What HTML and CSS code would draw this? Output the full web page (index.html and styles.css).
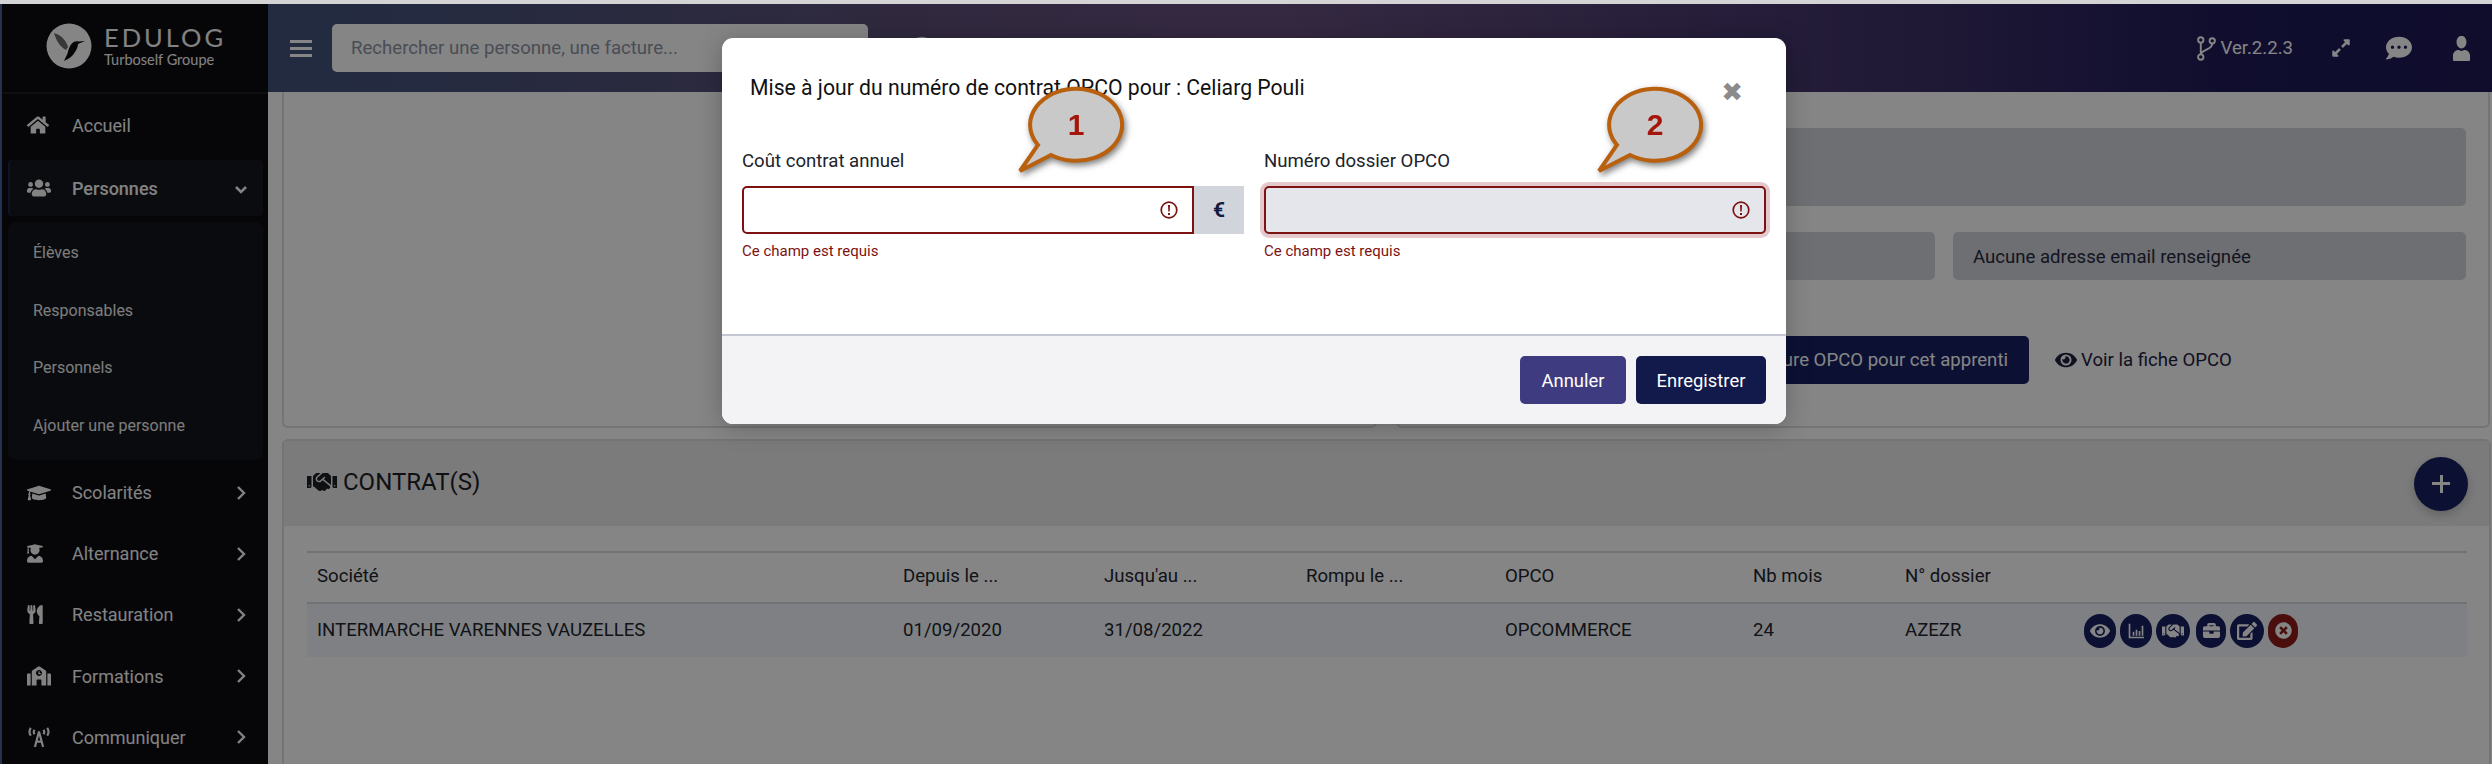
FILE: index.html
```html
<!DOCTYPE html>
<html lang="fr">
<head>
    <meta charset="utf-8">
    <title>Edulog</title>
    <link rel="stylesheet" href="styles.css">
</head>
<body>
    <!-- icon sprite -->
    <svg class="sprite" xmlns="http://www.w3.org/2000/svg">
        <symbol id="i-home" viewBox="0 0 576 512"><path d="M280.37 148.26L96 300.11V464a16 16 0 0 0 16 16l112.06-.29a16 16 0 0 0 15.92-16V368a16 16 0 0 1 16-16h64a16 16 0 0 1 16 16v95.64a16 16 0 0 0 16 16.05L464 480a16 16 0 0 0 16-16V300L295.67 148.26a12.19 12.19 0 0 0-15.3 0zM571.6 251.47L488 182.56V44.05a12 12 0 0 0-12-12h-56a12 12 0 0 0-12 12v72.61L318.47 43a48 48 0 0 0-61 0L4.34 251.47a12 12 0 0 0-1.6 16.9l25.5 31A12 12 0 0 0 45.15 301l235.22-193.74a12.19 12.19 0 0 1 15.3 0L530.9 301a12 12 0 0 0 16.9-1.6l25.5-31a12 12 0 0 0-1.7-16.93z"/></symbol>
        <symbol id="i-users" viewBox="0 0 640 512"><path d="M96 224c35.3 0 64-28.7 64-64s-28.7-64-64-64-64 28.7-64 64 28.7 64 64 64zm448 0c35.3 0 64-28.7 64-64s-28.7-64-64-64-64 28.7-64 64 28.7 64 64 64zm32 32h-64c-17.6 0-33.5 7.1-45.1 18.6 40.3 22.1 68.9 62 75.1 109.4h66c17.7 0 32-14.3 32-32v-32c0-35.3-28.7-64-64-64zm-256 0c61.9 0 112-50.1 112-112S381.9 32 320 32 208 82.1 208 144s50.1 112 112 112zm76.8 32h-8.3c-20.8 10-43.9 16-68.5 16s-47.6-6-68.5-16h-8.3C179.6 288 128 339.6 128 403.2V432c0 26.5 21.5 48 48 48h288c26.5 0 48-21.5 48-48v-28.8c0-63.6-51.6-115.2-115.2-115.2zm-223.7-13.4C161.5 263.1 145.6 256 128 256H64c-35.3 0-64 28.7-64 64v32c0 17.7 14.3 32 32 32h65.9c6.3-47.4 34.9-87.3 75.2-109.4z"/></symbol>
        <symbol id="i-cap" viewBox="0 0 640 512"><path d="M622.34 153.2L343.4 67.5c-15.2-4.67-31.6-4.67-46.79 0L17.66 153.2c-23.54 7.23-23.54 38.36 0 45.59l48.63 14.94c-10.67 13.19-17.23 29.28-17.88 46.9C38.78 266.15 32 276.11 32 288c0 10.78 5.68 19.85 13.86 25.65L20.33 428.53C18.11 438.52 25.71 448 35.94 448h56.11c10.24 0 17.84-9.48 15.62-19.47L82.14 313.65C90.32 307.85 96 298.78 96 288c0-11.57-6.47-21.25-15.66-26.87.76-15.02 8.44-28.3 20.69-36.72L296.6 284.5c9.06 2.78 26.44 6.25 46.79 0l278.95-85.7c23.55-7.24 23.55-38.36 0-45.6zM352.79 315.09c-28.53 8.76-52.84 3.92-65.59 0l-145.02-44.55L128 384c0 35.35 85.96 64 192 64s192-28.65 192-64l-14.18-113.47-145.03 44.56z"/></symbol>
        <symbol id="i-grad" viewBox="0 0 448 512"><path d="M319.4 320.6L224 416l-95.4-95.4C57.1 323.7 0 382.2 0 454.4v9.6c0 26.5 21.5 48 48 48h352c26.5 0 48-21.5 48-48v-9.6c0-72.2-57.1-130.7-128.6-133.8zM13.6 79.8l6.4 1.5v58.4c-7 4.2-12 11.5-12 20.3 0 8.4 4.6 15.4 11.1 19.7L3.5 242c-1.7 6.9 2.1 14 7.6 14h41.8c5.5 0 9.3-7.1 7.6-14l-15.6-62.3C51.4 175.4 56 168.4 56 160c0-8.8-5-16.1-12-20.3V87.1l66 15.9c-8.6 17.2-14 36.4-14 57 0 70.7 57.3 128 128 128s128-57.3 128-128c0-20.6-5.3-39.8-14-57l96.3-23.2c18.2-4.4 18.2-27.1 0-31.5l-190.4-46c-13-3.1-26.7-3.1-39.7 0L13.6 48.2c-18.1 4.4-18.1 27.2 0 31.6z"/></symbol>
        <symbol id="i-utensils" viewBox="0 0 416 512"><path d="M207.9 15.2c.8 4.7 16.1 94.5 16.1 128.8 0 52.3-27.8 89.6-68.9 104.6L168 486.7c.7 13.7-10.2 25.3-24 25.3H80c-13.7 0-24.7-11.5-24-25.3l12.9-238.1C27.7 233.6 0 196.2 0 144 0 109.6 15.3 19.9 16.1 15.2 19.3-5.1 61.4-5.4 64 16.3v141.2c1.3 3.4 15.1 3.2 16 0 1.4-25.3 7.9-139.2 8-141.8 3.3-20.8 44.7-20.8 47.9 0 .2 2.7 6.6 116.5 8 141.8.9 3.2 14.8 3.4 16 0V16.3c2.6-21.6 44.8-21.4 48-1.1zm119.2 285.7l-15 185.1c-1.2 14 9.9 26 23.9 26h56c13.3 0 24-10.7 24-24V24c0-13.2-10.7-24-24-24-82.5 0-221.4 178.5-64.9 300.9z"/></symbol>
        <symbol id="i-school" viewBox="0 0 640 512"><path d="M0 224v272c0 8.84 7.16 16 16 16h80V192H32c-17.67 0-32 14.33-32 32zm360-48h-24v-40c0-4.42-3.58-8-8-8h-16c-4.42 0-8 3.58-8 8v64c0 4.42 3.58 8 8 8h48c4.42 0 8-3.58 8-8v-16c0-4.42-3.58-8-8-8zm137.75-63.96l-160-106.67a32.02 32.02 0 0 0-35.5 0l-160 106.67A32.002 32.002 0 0 0 128 138.66V512h128V368c0-8.84 7.16-16 16-16h96c8.84 0 16 7.16 16 16v144h128V138.67c0-10.7-5.35-20.7-14.25-26.63zM320 256c-44.18 0-80-35.82-80-80s35.82-80 80-80 80 35.82 80 80-35.82 80-80 80zm288-64h-64v320h80c8.84 0 16-7.16 16-16V224c0-17.67-14.33-32-32-32z"/></symbol>
        <symbol id="i-tower" viewBox="0 0 26 22"><g fill="none" stroke="currentColor" stroke-width="2.4"><path d="M4 1Q1 5 4 9.5M22 1Q25 5 22 9.5M8 3Q6.5 5.5 8 8M18 3Q19.5 5.5 18 8"/><path d="M13 5L8.5 22M13 5l4.5 17M10 16h6"/></g></symbol>
        <symbol id="i-eye" viewBox="0 0 576 512"><path d="M572.52 241.4C518.29 135.59 410.93 64 288 64S57.68 135.64 3.48 241.41a32.35 32.35 0 0 0 0 29.19C57.71 376.41 165.07 448 288 448s230.32-71.64 284.52-177.41a32.35 32.35 0 0 0 0-29.19zM288 400a144 144 0 1 1 144-144 143.93 143.93 0 0 1-144 144zm0-240a95.31 95.31 0 0 0-25.31 3.79 47.85 47.85 0 0 1-66.9 66.9A95.78 95.78 0 1 0 288 160z"/></symbol>
        <symbol id="i-chart" viewBox="0 0 24 24"><path d="M1 1h2.5v19.5H24V23H1zM7 13h2.5v6H7zM11.5 10H14v9h-2.5zM16 12h2.5v7H16zM20.5 4H23v15h-2.5z"/></symbol>
        <symbol id="i-handshake" viewBox="0 0 640 512"><path d="M434.7 64h-85.9c-8 0-15.7 3-21.6 8.4l-98.3 90c-.1.1-.2.3-.3.4-16.6 15.6-16.3 40.5-2.1 56 12.7 13.9 39.4 17.6 56.1 2.7.1-.1.3-.1.4-.2l79.9-73.2c6.5-5.9 16.7-5.5 22.6 1 6 6.5 5.5 16.6-1 22.6l-26.1 23.9L504 313.8c2.9 2.4 5.5 5 7.9 7.7V128l-54.6-54.6c-5.9-6-14.1-9.4-22.6-9.4zM544 128.2v223.9c0 17.7 14.3 32 32 32h64V128.2h-96zm48 223.9c-8.8 0-16-7.2-16-16s7.2-16 16-16 16 7.2 16 16-7.2 16-16 16zM0 384h64c17.7 0 32-14.3 32-32V128.2H0V384zm48-63.9c8.8 0 16 7.2 16 16s-7.2 16-16 16-16-7.2-16-16c0-8.9 7.2-16 16-16zm435.9 18.6L334.6 217.5l-30 27.5c-29.7 27.1-75.2 24.5-101.7-4.4-26.9-29.4-24.8-74.9 4.4-101.7L289.1 64h-83.8c-8.5 0-16.6 3.4-22.6 9.4L128 128v223.9h18.3l90.5 81.9c27.4 22.3 67.7 18.1 90-9.3l.2-.2 17.9 15.5c15.9 13 39.4 10.5 52.3-5.4l31.4-38.6 5.4 4.4c13.7 11.1 33.9 9.1 45-4.7l9.5-11.7c11.2-13.8 9.1-33.9-4.6-45z"/></symbol>
        <symbol id="i-briefcase" viewBox="0 0 512 512"><path d="M320 336c0 8.84-7.16 16-16 16h-96c-8.84 0-16-7.16-16-16v-48H0v144c0 25.6 22.4 48 48 48h416c25.6 0 48-22.4 48-48V288H320v48zm144-208h-80V80c0-25.6-22.4-48-48-48H176c-25.6 0-48 22.4-48 48v48H48c-25.6 0-48 22.4-48 48v80h512v-80c0-25.6-22.4-48-48-48zm-144 0H192V96h128v32z"/></symbol>
        <symbol id="i-edit" viewBox="0 0 576 512"><path d="M402.6 83.2l90.2 90.2c3.8 3.8 3.8 10 0 13.8L274.4 405.6l-92.8 10.3c-12.4 1.4-22.9-9.1-21.5-21.5l10.3-92.8L388.8 83.2c3.8-3.8 10-3.8 13.8 0zm162-22.9l-48.8-48.8c-15.2-15.2-39.9-15.2-55.2 0l-35.4 35.4c-3.8 3.8-3.8 10 0 13.8l90.2 90.2c3.8 3.8 10 3.8 13.8 0l35.4-35.4c15.2-15.3 15.2-40 0-55.2zM384 346.2V448H64V128h229.8c3.2 0 6.2-1.3 8.5-3.5l40-40c7.6-7.6 2.2-20.5-8.5-20.5H48C21.5 64 0 85.5 0 112v352c0 26.5 21.5 48 48 48h352c26.5 0 48-21.5 48-48V306.2c0-10.7-12.9-16-20.5-8.5l-40 40c-2.2 2.3-3.5 5.3-3.5 8.5z"/></symbol>
        <symbol id="i-times-circle" viewBox="0 0 512 512"><path d="M256 8C119 8 8 119 8 256s111 248 248 248 248-111 248-248S393 8 256 8zm121.6 313.1c4.7 4.7 4.7 12.3 0 17L338 377.6c-4.7 4.7-12.3 4.7-17 0L256 312l-65.1 65.6c-4.7 4.7-12.3 4.7-17 0L134.4 338c-4.7-4.7-4.7-12.3 0-17l65.6-65-65.6-65.1c-4.7-4.7-4.7-12.3 0-17l39.6-39.6c4.7-4.7 12.3-4.7 17 0l65 65.7 65.1-65.6c4.7-4.7 12.3-4.7 17 0l39.6 39.6c4.7 4.7 4.7 12.3 0 17L312 256l65.6 65.1z"/></symbol>
        <symbol id="i-expand" viewBox="0 0 448 512"><path d="M212.686 315.314L120 408l32.922 31.029c15.12 15.12 4.412 40.971-16.97 40.971h-112C10.697 480 0 469.255 0 456V344c0-21.382 25.803-32.09 40.922-16.971L72 360l92.686-92.686c6.248-6.248 16.379-6.248 22.627 0l25.373 25.373c6.249 6.248 6.249 16.378 0 22.627zm22.628-118.628L328 104l-32.922-31.029C279.958 57.851 290.666 32 312.048 32h112C437.303 32 448 42.745 448 56v112c0 21.382-25.803 32.09-40.922 16.971L376 152l-92.686 92.686c-6.248 6.248-16.379 6.248-22.627 0l-25.373-25.373c-6.249-6.248-6.249-16.378 0-22.627z"/></symbol>
        <symbol id="i-comment" viewBox="0 0 512 512"><path d="M256 32C114.6 32 0 125.1 0 240c0 49.6 21.4 95 57 130.7C44.5 421.1 2.7 466 2.2 466.5c-2.2 2.3-2.8 5.7-1.5 8.7S4.8 480 8 480c66.3 0 116-31.8 140.6-51.4 32.7 12.3 69 19.4 107.4 19.4 141.4 0 256-93.1 256-208S397.4 32 256 32zM128 272c-17.7 0-32-14.3-32-32s14.3-32 32-32 32 14.3 32 32-14.3 32-32 32zm128 0c-17.7 0-32-14.3-32-32s14.3-32 32-32 32 14.3 32 32-14.3 32-32 32zm128 0c-17.7 0-32-14.3-32-32s14.3-32 32-32 32 14.3 32 32-14.3 32-32 32z"/></symbol>
        <symbol id="i-user" viewBox="0 0 448 512"><path d="M224 256c70.7 0 128-57.3 128-128S294.7 0 224 0 96 57.3 96 128s57.3 128 128 128zm89.6 32h-16.7c-22.2 10.2-46.9 16-72.9 16s-50.6-5.8-72.9-16h-16.7C60.2 288 0 348.2 0 422.4V464c0 26.5 21.5 48 48 48h352c26.5 0 48-21.5 48-48v-41.6c0-74.2-60.2-134.4-134.4-134.4z"/></symbol>
        <symbol id="i-branch" viewBox="0 0 22 26"><g fill="none" stroke="currentColor" stroke-width="2"><circle cx="5" cy="4" r="2.8"/><circle cx="5" cy="22" r="2.8"/><circle cx="17" cy="5" r="2.8"/><path d="M5 7v12M17 8c0 6-8 5-11.5 10"/></g></symbol>
        <symbol id="i-chevron-right" viewBox="0 0 10 16"><path d="M2 2l6 6-6 6" fill="none" stroke="currentColor" stroke-width="2.4"/></symbol>
        <symbol id="i-chevron-down" viewBox="0 0 14 10"><path d="M2 2l5 5 5-5" fill="none" stroke="currentColor" stroke-width="2.6"/></symbol>
        <symbol id="i-alert" viewBox="0 0 18 18"><circle cx="9" cy="9" r="7.8" fill="none" stroke="currentColor" stroke-width="1.7"/><path d="M8 4h2l-.3 6.5H8.3zM8 12h2v2H8z"/></symbol>
    </svg>

    <div class="app">
        <aside class="sidebar">
            <div class="logo">
                <svg class="logo-mark" viewBox="0 0 46 46">
                    <circle cx="23" cy="23" r="22.5" fill="#fff"/>
                    <path d="M8 10c7 2 12 7 14 14l-2 3C14 24 10 17 8 10z" fill="#6a6a6a"/>
                    <path d="M39 18l-6 .5c-3-1-6 0-8 3-2.5 4-3 7-3.5 9L18 38c5-2 9-5 11-9 2-3 3-6 3-8z" fill="#0c0d11"/>
                </svg>
                <div class="logo-text">
                    <div class="logo-name">EDULOG</div>
                    <div class="logo-sub">Turboself Groupe</div>
                </div>
            </div>
            <nav class="nav">
                <a class="nav-item nav-first"><svg class="nav-icon icon-home"><use href="#i-home"/></svg>Accueil</a>
                <a class="nav-item nav-active"><svg class="nav-icon icon-users"><use href="#i-users"/></svg>Personnes<svg class="nav-chevron-down"><use href="#i-chevron-down"/></svg></a>
                <div class="nav-sub">
                    <a class="nav-sub-item">Élèves</a>
                    <a class="nav-sub-item">Responsables</a>
                    <a class="nav-sub-item">Personnels</a>
                    <a class="nav-sub-item">Ajouter une personne</a>
                </div>
                <div class="nav-rest">
                    <a class="nav-item"><svg class="nav-icon icon-users"><use href="#i-cap"/></svg>Scolarités<svg class="nav-chevron"><use href="#i-chevron-right"/></svg></a>
                    <a class="nav-item"><svg class="nav-icon icon-tall"><use href="#i-grad"/></svg>Alternance<svg class="nav-chevron"><use href="#i-chevron-right"/></svg></a>
                    <a class="nav-item"><svg class="nav-icon icon-tall"><use href="#i-utensils"/></svg>Restauration<svg class="nav-chevron"><use href="#i-chevron-right"/></svg></a>
                    <a class="nav-item"><svg class="nav-icon icon-users"><use href="#i-school"/></svg>Formations<svg class="nav-chevron"><use href="#i-chevron-right"/></svg></a>
                    <a class="nav-item"><svg class="nav-icon icon-users"><use href="#i-tower"/></svg>Communiquer<svg class="nav-chevron"><use href="#i-chevron-right"/></svg></a>
                </div>
            </nav>
        </aside>

        <div class="main">
            <header class="topbar">
                <div class="burger"><span></span><span></span><span></span></div>
                <input class="search" type="text" placeholder="Rechercher une personne, une facture...">
                <svg class="history" viewBox="0 0 24 24"><circle cx="12" cy="12" r="10" fill="none" stroke="currentColor" stroke-width="2.5"/></svg>
                <div class="topbar-right">
                    <span class="version"><svg class="icon-branch"><use href="#i-branch"/></svg>Ver.2.2.3</span>
                    <svg class="icon-expand"><use href="#i-expand"/></svg>
                    <svg class="icon-comment"><use href="#i-comment"/></svg>
                    <svg class="icon-user"><use href="#i-user"/></svg>
                </div>
            </header>

            <div class="content">
                <div class="top-cards">
                    <section class="card"></section>
                    <section class="card card-opco">
                        <div class="field field-big"></div>
                        <div class="field-row">
                            <div class="field"></div>
                            <div class="field">Aucune adresse email renseignée</div>
                        </div>
                        <div class="opco-actions">
                            <button class="btn-opco">Ajouter une facture OPCO pour cet apprenti</button>
                            <a class="opco-link"><svg class="icon-eye"><use href="#i-eye"/></svg>Voir la fiche OPCO</a>
                        </div>
                    </section>
                </div>

                <section class="card card-contrats">
                    <div class="card-header">
                        <h2 class="card-title"><svg class="icon-title"><use href="#i-handshake"/></svg>CONTRAT(S)</h2>
                        <button class="fab"><span class="fab-plus"></span></button>
                    </div>
                    <div class="card-body">
                        <table class="table">
                            <colgroup>
                                <col class="col-societe">
                                <col class="col-depuis">
                                <col class="col-jusque">
                                <col class="col-rompu">
                                <col class="col-opco">
                                <col class="col-mois">
                                <col class="col-dossier">
                                <col>
                            </colgroup>
                            <thead>
                                <tr>
                                    <th>Société</th>
                                    <th>Depuis le ...</th>
                                    <th>Jusqu'au ...</th>
                                    <th>Rompu le ...</th>
                                    <th>OPCO</th>
                                    <th>Nb mois</th>
                                    <th>N° dossier</th>
                                    <th></th>
                                </tr>
                            </thead>
                            <tbody>
                                <tr>
                                    <td>INTERMARCHE VARENNES VAUZELLES</td>
                                    <td>01/09/2020</td>
                                    <td>31/08/2022</td>
                                    <td></td>
                                    <td>OPCOMMERCE</td>
                                    <td>24</td>
                                    <td>AZEZR</td>
                                    <td class="cell-actions">
                                        <div class="row-actions">
                                            <span class="pill"><svg class="pill-eye"><use href="#i-eye"/></svg></span>
                                            <span class="pill"><svg class="pill-chart"><use href="#i-chart"/></svg></span>
                                            <span class="pill pill-wide"><svg class="pill-hand"><use href="#i-handshake"/></svg></span>
                                            <span class="pill pill-narrow pill-case-wrap"><svg class="pill-case"><use href="#i-briefcase"/></svg></span>
                                            <span class="pill pill-wide"><svg class="pill-edit"><use href="#i-edit"/></svg></span>
                                            <span class="pill pill-narrow pill-danger"><svg class="pill-times"><use href="#i-times-circle"/></svg></span>
                                        </div>
                                    </td>
                                </tr>
                            </tbody>
                        </table>
                    </div>
                </section>
            </div>
        </div>

        <div class="backdrop">
            <div class="modal">
                <div class="modal-header">
                    <h3 class="modal-title">Mise à jour du numéro de contrat OPCO pour : Celiarg Pouli</h3>
                    <span class="modal-close">✖</span>
                </div>
                <div class="modal-body">
                    <div class="form-group">
                        <label class="form-label">Coût contrat annuel</label>
                        <div class="input-group">
                            <div class="input-wrap">
                                <input class="form-input form-input-append" type="text">
                                <svg class="input-alert"><use href="#i-alert"/></svg>
                            </div>
                            <span class="input-addon">€</span>
                        </div>
                        <div class="form-error">Ce champ est requis</div>
                    </div>
                    <div class="form-group">
                        <label class="form-label">Numéro dossier OPCO</label>
                        <div class="input-group">
                            <div class="input-wrap">
                                <input class="form-input form-input-focus" type="text">
                                <svg class="input-alert"><use href="#i-alert"/></svg>
                            </div>
                        </div>
                        <div class="form-error">Ce champ est requis</div>
                    </div>
                </div>
                <div class="modal-footer">
                    <button class="btn btn-cancel">Annuler</button>
                    <button class="btn btn-save">Enregistrer</button>
                </div>
            </div>
        </div>

        <!-- annotations posees sur la capture -->
        <svg class="bubble bubble-one" viewBox="0 0 120 100">
            <path class="bubble-shape" d="M24 65A46 36 0 1 1 37 75L6 91z"/>
            <text class="bubble-num" x="62" y="55">1</text>
        </svg>
        <svg class="bubble bubble-two" viewBox="0 0 120 100">
            <path class="bubble-shape" d="M24 65A46 36 0 1 1 37 75L6 91z"/>
            <text class="bubble-num" x="62" y="55">2</text>
        </svg>
    </div>
</body>
</html>
```

FILE: styles.css
```css
* {
    box-sizing: border-box;
}

html, body {
    margin: 0;
    height: 764px;
    overflow: hidden;
}

body {
    background-color: #d4d4d4;
    padding-top: 4px;
    font-family: Roboto, "Liberation Sans", sans-serif;
    font-size: 18.6px;
    color: #262a33;
}

.sprite {
    position: absolute;
    width: 0;
    height: 0;
}

svg {
    fill: currentColor;
}

.app {
    position: relative;
    display: flex;
    height: 760px;
    border-left: 2px solid #26304f;
    background-color: #fff;
}

/* sidebar */
.sidebar {
    width: 266px;
    flex-shrink: 0;
    background-color: #0c0d11;
    color: #fafafa;
    font-size: 18px;
}

.logo {
    display: flex;
    align-items: center;
    height: 90px;
    padding: 0 0 5px 44px;
    border-bottom: 2px solid #1c1d20;
}

.logo-mark {
    width: 46px;
    height: 46px;
    flex-shrink: 0;
}

.logo-text {
    margin-left: 12px;
}

.logo-name {
    font-family: Lato, sans-serif;
    font-weight: 400;
    font-size: 25.5px;
    line-height: 28px;
    letter-spacing: 3px;
}

.logo-sub {
    font-family: Lato, sans-serif;
    font-size: 14.5px;
    line-height: 16px;
    margin-top: 1px;
}

.nav {
    padding-top: 1px;
}

.nav-item {
    display: flex;
    align-items: center;
    height: 61px;
    padding-left: 25px;
    padding-right: 22px;
}

.nav-first {
    height: 60px;
}

.nav-active {
    height: 56px;
    margin: 5px 5px 0 6px;
    padding-left: 17px;
    padding-right: 15px;
    background-color: #14171e;
    border-left: 2px solid #1c2150;
    border-radius: 4px;
    font-weight: 500;
}

.nav-icon {
    flex-shrink: 0;
    margin-right: 21px;
    width: 24px;
    height: 20px;
}

.icon-home {
    width: 22px;
    height: 20px;
    margin-right: 23px;
}

.icon-tall {
    width: 16px;
    height: 19px;
    margin-right: 29px;
}

.nav-chevron {
    width: 10px;
    height: 16px;
    margin-left: auto;
}

.nav-chevron-down {
    width: 14px;
    height: 10px;
    margin-left: auto;
    margin-top: 4px;
}

.nav-sub {
    height: 238px;
    margin: 6px 5px 0 6px;
    padding-top: 2px;
    background-color: #13161c;
    border-radius: 8px;
    font-size: 16px;
}

.nav-sub-item {
    display: flex;
    align-items: center;
    height: 57.5px;
    padding-left: 25px;
    color: #eee;
}

.nav-rest {
    margin-top: 2px;
}

.nav-rest .nav-item {
    height: 61.2px;
}

/* main */
.main {
    flex: 1;
    min-width: 0;
    display: flex;
    flex-direction: column;
}

.topbar {
    display: flex;
    align-items: center;
    flex-shrink: 0;
    height: 88px;
    padding-left: 22px;
    background: linear-gradient(90deg, #41547c 0%, #5e5078 30%, #67507f 45%, #3c3068 75%, #1f1a58 88%, #1d1855 100%);
    color: #fff;
}

.burger {
    width: 22px;
    margin-right: 20px;
}

.burger span {
    display: block;
    height: 3px;
    background-color: #fff;
    margin: 4px 0;
}

.search {
    width: 536px;
    height: 48px;
    border: 0;
    border-radius: 5px;
    padding: 0 19px;
    background-color: #fff;
    font: 18.6px Roboto, sans-serif;
}

.search::placeholder {
    color: #8e94a3;
    opacity: 1;
}

.history {
    width: 24px;
    height: 24px;
    margin-left: 42px;
    color: #e0e0e0;
}

.topbar-right {
    display: flex;
    align-items: center;
    margin-left: auto;
    padding-right: 22px;
}

.version {
    display: flex;
    align-items: center;
    gap: 3px;
}

.icon-branch {
    width: 21px;
    height: 25px;
}

.icon-expand {
    width: 18px;
    height: 20px;
    margin-left: 39px;
}

.icon-comment {
    width: 26px;
    height: 26px;
    margin-left: 36px;
}

.icon-user {
    width: 17px;
    height: 19px;
    margin-left: 41px;
    transform: scale(1.05, 1.35);
}

.content {
    flex: 1;
    min-height: 0;
    padding: 0 1px 0 14px;
    overflow: hidden;
}

.top-cards {
    display: grid;
    grid-template-columns: 1095px 1094px;
    gap: 19px;
    height: 336px;
}

.card {
    background-color: #fff;
    border: 2px solid #dedede;
    border-top: 0;
    border-radius: 0 0 6px 6px;
}

.card-opco {
    padding: 36px 22px 0 23px;
}

.field {
    height: 48px;
    padding: 2px 20px 0;
    display: flex;
    align-items: center;
    background-color: #d4d5db;
    border-radius: 5px;
    color: #262a3e;
}

.field-big {
    height: 78px;
}

.field-row {
    display: grid;
    grid-template-columns: 514px 513px;
    gap: 18px;
    margin-top: 26px;
}

.opco-actions {
    display: flex;
    align-items: center;
    margin-top: 56px;
}

.btn-opco {
    width: 608px;
    height: 48px;
    border: 0;
    border-radius: 5px;
    padding: 0 21px;
    text-align: right;
    background-color: #171f62;
    color: #fff;
    font: 18.6px Roboto, sans-serif;
}

.opco-link {
    display: flex;
    align-items: center;
    gap: 4px;
    margin-left: 26px;
    color: #1d2140;
}

.icon-eye {
    width: 22px;
    height: 20px;
}

.card-contrats {
    margin-top: 11px;
    height: 400px;
    border-top: 2px solid #dedede;
    border-radius: 6px;
}

.card-header {
    display: flex;
    align-items: center;
    justify-content: space-between;
    height: 85px;
    padding: 0 21px 0 23px;
    background-color: #ececec;
}

.card-title {
    display: flex;
    align-items: center;
    gap: 6px;
    margin: 0 0 3px;
    font-size: 24px;
    font-weight: 400;
    color: #1e2026;
}

.icon-title {
    width: 30px;
    height: 24px;
}

.fab {
    width: 54px;
    height: 54px;
    border: 0;
    border-radius: 50%;
    background-color: #171f62;
    box-shadow: 0 4px 10px rgba(0, 0, 0, 0.2);
}

.fab-plus {
    display: block;
    width: 18px;
    height: 18px;
    margin: auto;
    background: linear-gradient(#fff, #fff) center / 18px 3px no-repeat, linear-gradient(#fff, #fff) center / 3px 18px no-repeat;
}

.card-body {
    padding: 25px 21px 0 23px;
}

.table {
    width: 2160px;
    table-layout: fixed;
    border-collapse: collapse;
    color: #22262e;
}

.col-societe { width: 586px; }
.col-depuis { width: 201px; }
.col-jusque { width: 202px; }
.col-rompu { width: 199px; }
.col-opco { width: 248px; }
.col-mois { width: 152px; }
.col-dossier { width: 179px; }

.table th {
    height: 51px;
    padding: 0 0 3px 10px;
    text-align: left;
    font-weight: 400;
    border-top: 2px solid #d6dbe3;
    border-bottom: 2px solid #d6dbe3;
}

.table td {
    height: 54px;
    padding: 0 0 2px 10px;
    background-color: #f3f6fb;
}

.table .cell-actions {
    padding-bottom: 0;
}

.row-actions {
    display: flex;
    gap: 4px;
}

.pill {
    display: flex;
    align-items: center;
    justify-content: center;
    width: 32px;
    height: 34px;
    border-radius: 17px;
    background-color: #171f62;
    color: #fff;
}

.pill-wide {
    width: 34px;
}

.pill-narrow {
    width: 30px;
}

.pill-case-wrap {
    margin-left: 2px;
}

.pill-danger {
    background-color: #8f1b17;
}

.pill-eye { width: 20px; height: 18px; }
.pill-chart { width: 16px; height: 16px; }
.pill-hand { width: 22px; height: 18px; }
.pill-case { width: 17px; height: 17px; }
.pill-edit { width: 20px; height: 18px; }
.pill-times { width: 17px; height: 17px; }

/* modal */
.backdrop {
    position: absolute;
    inset: 0;
    display: flex;
    justify-content: center;
    padding: 34px 0 0 14px;
    background-color: rgba(0, 0, 0, 0.48);
}

.modal {
    display: flex;
    flex-direction: column;
    width: 1064px;
    height: 386px;
    background-color: #fff;
    border-radius: 11px;
    box-shadow: 0 3px 24px rgba(0, 0, 0, 0.25);
    overflow: hidden;
}

.modal-header {
    display: flex;
    justify-content: space-between;
    align-items: flex-start;
    height: 113px;
    padding: 37px 43px 0 28px;
}

.modal-title {
    margin: 0;
    font-size: 21.2px;
    line-height: 26px;
    font-weight: 400;
    color: #111;
}

.modal-close {
    font-family: "DejaVu Sans", sans-serif;
    font-size: 26px;
    line-height: 30px;
    margin-top: 2px;
    color: #8b8b8b;
}

.modal-body {
    flex: 1;
    display: grid;
    grid-template-columns: 502px 502px;
    gap: 20px;
    padding: 0 20px;
}

.form-label {
    display: block;
    line-height: 21px;
    margin-bottom: 14px;
    color: #20232a;
}

.input-group {
    display: flex;
}

.input-wrap {
    position: relative;
    flex: 1;
}

.form-input {
    display: block;
    width: 100%;
    height: 48px;
    border: 2px solid #7d1212;
    border-radius: 5px;
    background-color: #fff;
    font: 18px Roboto, sans-serif;
}

.form-input-append {
    border-radius: 5px 0 0 5px;
}

.form-input-focus {
    background-color: #e5e6eb;
    box-shadow: 0 0 0 4px #e3c9cb;
}

.input-alert {
    position: absolute;
    right: 16px;
    top: 15px;
    width: 18px;
    height: 18px;
    color: #7d1212;
}

.input-addon {
    display: flex;
    align-items: center;
    justify-content: center;
    width: 50px;
    height: 48px;
    background-color: #d1d5db;
    color: #161a40;
    font-size: 21px;
    font-weight: 700;
}

.form-error {
    margin-top: 8px;
    font-size: 15px;
    line-height: 18px;
    color: #7d1212;
}

.modal-footer {
    display: flex;
    justify-content: flex-end;
    gap: 10px;
    height: 90px;
    padding: 20px 20px 0;
    background-color: #f3f3f6;
    border-top: 2px solid #c5c8d3;
}

.btn {
    height: 48px;
    border: 0;
    border-radius: 5px;
    color: #fff;
    font: 18.4px Roboto, sans-serif;
}

.btn-cancel {
    width: 106px;
    background-color: #3f3b80;
}

.btn-save {
    width: 130px;
    background-color: #121a4c;
}

/* bulles */
.bubble {
    position: absolute;
    top: 76px;
    width: 120px;
    height: 100px;
    filter: drop-shadow(2px 3px 3px rgba(0, 0, 0, 0.5));
}

.bubble-one {
    left: 1012px;
}

.bubble-two {
    left: 1591px;
}

.bubble-shape {
    fill: #c9c9c9;
    stroke: #b9600f;
    stroke-width: 4;
}

.bubble-num {
    fill: #a5160a;
    font-family: "Liberation Sans", sans-serif;
    font-weight: 700;
    font-size: 30px;
    text-anchor: middle;
}
```
